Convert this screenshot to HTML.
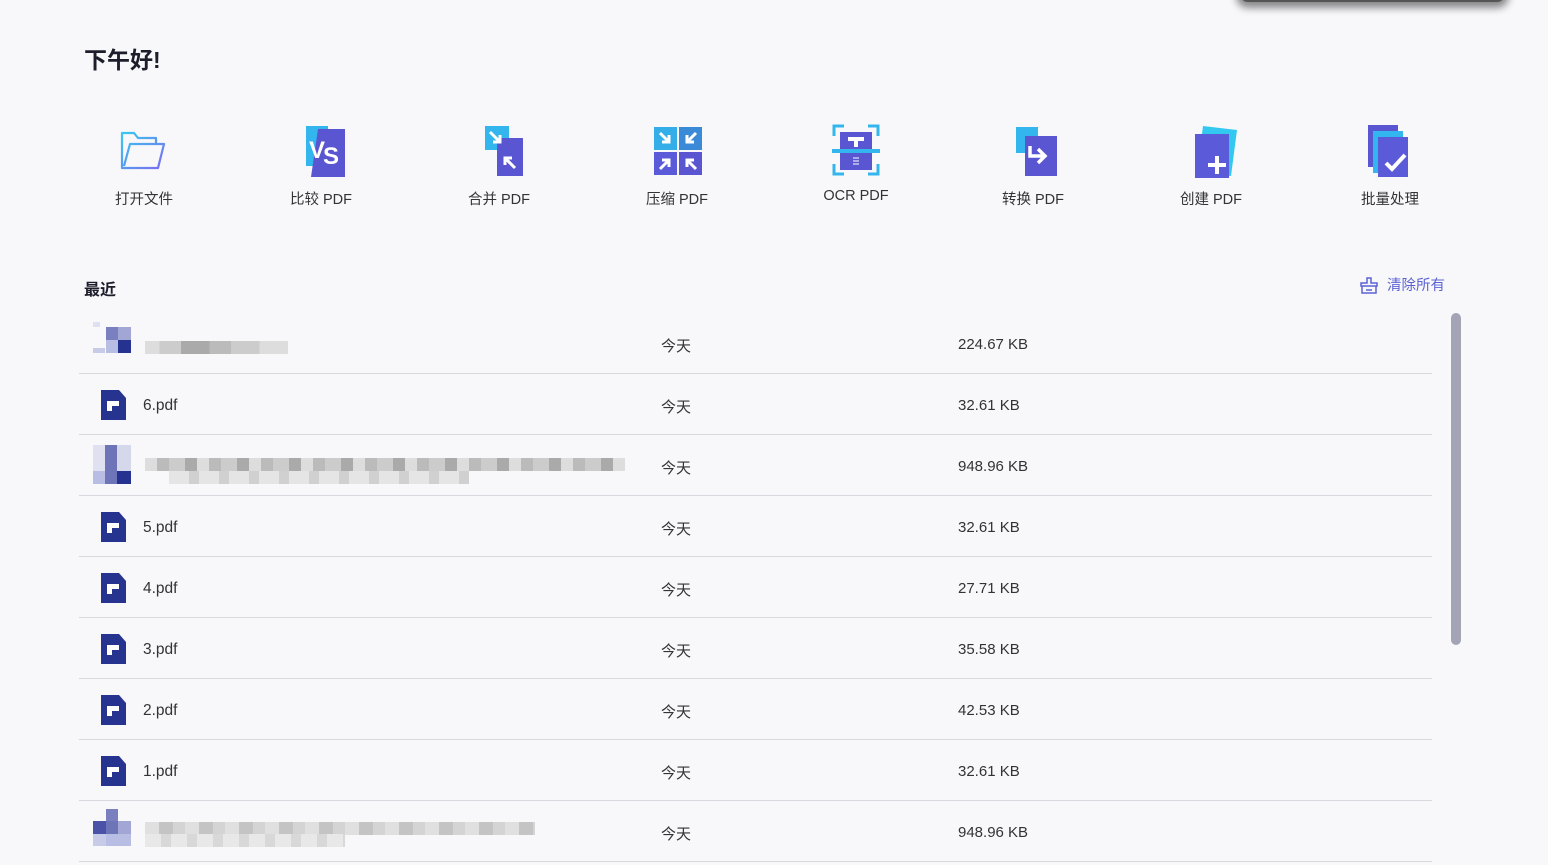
<!DOCTYPE html>
<html><head><meta charset="utf-8"><style>
body{margin:0;width:1548px;height:865px;background:#f8f8fb;font-family:"Liberation Sans","Noto Sans CJK SC",sans-serif;position:relative;overflow:hidden;color:#333}
.shadow{position:absolute;left:1240px;top:-14px;width:265px;height:16px;border-radius:8px;background:#555;box-shadow:0 2px 8px 4px rgba(0,0,0,.45)}
h1{position:absolute;left:84px;top:41px;margin:0;font-size:23px;font-weight:bold;color:#1d1d2b}
.tool{position:absolute;top:122px;width:140px;text-align:center}
.tool svg{display:block;margin:0 auto}
.tool span{display:block;font-size:14.5px;color:#333;margin-top:10px}
.recent{position:absolute;left:84px;top:276px;font-size:16px;font-weight:bold;color:#1d1d2b}
.clear{position:absolute;left:1360px;top:274px;font-size:14.5px;color:#5b63d3;display:flex;align-items:center;gap:9px}
.row{position:absolute;left:79px;width:1353px;height:60px;border-bottom:1px solid #d8d8de}
.row .ic{position:absolute;left:22px;top:16px}
.row .n{position:absolute;left:64px;top:23px;font-size:15.5px;color:#333}
.row .d{position:absolute;left:582px;top:22px;font-size:15px;color:#333}
.row .s{position:absolute;left:879px;top:23px;font-size:15px;color:#333}
.px{position:absolute;height:13px}
.scroll{position:absolute;left:1451px;top:313px;width:10px;height:332px;border-radius:5px;background:#a3a5b6}
</style></head><body>
<div class="shadow"></div>
<h1>下午好!</h1>

<div class="tool" style="left:74px"><svg width="52" height="56" viewBox="0 0 52 56"><defs><linearGradient id="fg" x1="0" y1="0" x2="1" y2="1"><stop offset="0" stop-color="#38c8f0"/><stop offset="1" stop-color="#7b6cf0"/></linearGradient></defs><path d="M4 18 V11 h12 l4 5 h18 v6 M4 18 V46 h36 l6-24 H12 l-6 22" fill="none" stroke="url(#fg)" stroke-width="2.2" stroke-linejoin="round"/></svg><span>打开文件</span></div>

<div class="tool" style="left:251px"><svg width="56" height="56" viewBox="0 0 56 56"><rect x="13" y="4" width="22" height="40" fill="#33b6ee"/><polygon points="25,7 52,7 52,55 18,55" fill="#5a55d0"/><text x="16" y="36" font-size="24" font-weight="bold" fill="#fff" font-family="Liberation Sans">V</text><text x="30" y="42" font-size="24" font-weight="bold" fill="#fff" font-family="Liberation Sans">S</text></svg><span>比较 PDF</span></div>

<div class="tool" style="left:429px"><svg width="56" height="56" viewBox="0 0 56 56"><rect x="14" y="4" width="24" height="24" fill="#33b6ee"/><rect x="26" y="16" width="26" height="38" fill="#5a55d0"/><path d="M19 10 l10 10 M29 13 v7 h-7" stroke="#fff" stroke-width="3" fill="none"/><path d="M44 46 l-10-10 M34 43 v-7 h7" stroke="#fff" stroke-width="3" fill="none"/></svg><span>合并 PDF</span></div>

<div class="tool" style="left:607px"><svg width="56" height="56" viewBox="0 0 56 56"><rect x="5" y="5" width="23" height="23" fill="#33aee8"/><rect x="30" y="5" width="23" height="23" fill="#3a8ad8"/><rect x="5" y="30" width="23" height="23" fill="#5b5ad8"/><rect x="30" y="30" width="23" height="23" fill="#5a55d0"/><g stroke="#fff" stroke-width="3" fill="none"><path d="M11 11l9 9M20 13v7h-7"/><path d="M47 11l-9 9M38 13v7h7"/><path d="M11 47l9-9M13 38h7v7"/><path d="M47 47l-9-9M45 38h-7v7"/></g></svg><span>压缩 PDF</span></div>

<div class="tool" style="left:786px"><svg width="56" height="56" viewBox="0 0 56 56"><g stroke="#33b6ee" stroke-width="3" fill="none"><path d="M6 14V4h10M40 4h10v10M6 42v10h10M40 52h10V42"/></g><rect x="12" y="10" width="32" height="38" fill="#5a55d0"/><rect x="4" y="27" width="48" height="4" fill="#33b6ee"/><path d="M20 17h16M28 17v8" stroke="#fff" stroke-width="4"/><path d="M25 36h6M25 39h6M25 42h6" stroke="#fff" stroke-width="1"/></svg><span>OCR PDF</span></div>

<div class="tool" style="left:963px"><svg width="56" height="56" viewBox="0 0 56 56"><rect x="11" y="5" width="22" height="26" fill="#33b6ee"/><rect x="20" y="14" width="32" height="40" fill="#5a55d0"/><path d="M25 24v10h14M33 27l7 7-7 7" stroke="#fff" stroke-width="3.5" fill="none"/></svg><span>转换 PDF</span></div>

<div class="tool" style="left:1141px"><svg width="56" height="56" viewBox="0 0 56 56"><polygon points="20,4 54,8 48,54 14,50" fill="#33c8f0"/><rect x="12" y="12" width="34" height="44" fill="#5b5ad8"/><path d="M34 34v18M25 43h18" stroke="#fff" stroke-width="4"/></svg><span>创建 PDF</span></div>

<div class="tool" style="left:1320px"><svg width="56" height="56" viewBox="0 0 56 56"><rect x="6" y="3" width="30" height="42" fill="#5a55d0"/><rect x="11" y="9" width="30" height="42" fill="#33b6ee"/><rect x="16" y="15" width="30" height="40" fill="#5b5ad8"/><path d="M24 41l6 6 13-14" stroke="#fff" stroke-width="4" fill="none"/></svg><span>批量处理</span></div>

<div class="recent">最近</div>
<div class="clear"><svg width="18" height="18" viewBox="0 0 18 18" fill="none" stroke="#5b63d3" stroke-width="1.5"><path d="M7 2h4v5h6v3H1V7h6z M2 10v7h14v-7 M6 14h6"/></svg>清除所有</div>

<div class="row" style="top:313px"><svg class="ic" width="40" height="32" viewBox="0 0 40 32" style="left:14px;top:9px"><rect x="0" y="0" width="7" height="5" fill="#dfe0f0"/><rect x="13" y="5" width="12" height="13" fill="#7a7fbf"/><rect x="25" y="5" width="13" height="13" fill="#a1a6d4"/><rect x="13" y="18" width="12" height="13" fill="#b8bde4"/><rect x="25" y="18" width="13" height="13" fill="#25328f"/><rect x="0" y="26" width="12" height="5" fill="#c8cbe8"/></svg>
<div class="px" style="left:66px;top:28px;width:143px;background:linear-gradient(90deg,#ddd 0 10%,#ccc 10% 25%,#aaa 25% 45%,#bbb 45% 60%,#ccc 60% 80%,#ddd 80%)"></div>
<div class="d">今天</div><div class="s">224.67 KB</div></div>

<div class="row" style="top:374px"><svg class="ic" width="26" height="30" viewBox="0 0 26 30"><path d="M0 0h18l7 8v22H0z" fill="#27348f"/><path d="M6 11h12v5h-7v5H6z" fill="#fff"/></svg><div class="n">6.pdf</div><div class="d">今天</div><div class="s">32.61 KB</div></div>

<div class="row" style="top:435px"><svg class="ic" width="40" height="40" viewBox="0 0 40 40" style="left:14px;top:10px"><rect x="0" y="0" width="12" height="26" fill="#dfe0f0"/><rect x="12" y="0" width="12" height="26" fill="#6e74b8"/><rect x="24" y="0" width="14" height="26" fill="#d5d7ea"/><rect x="0" y="26" width="12" height="13" fill="#b8bde4"/><rect x="12" y="26" width="12" height="13" fill="#6e74b8"/><rect x="24" y="26" width="14" height="13" fill="#25328f"/></svg>
<div class="px" style="left:66px;top:23px;width:480px;background:repeating-linear-gradient(90deg,#ddd 0 12px,#bbb 12px 24px,#ccc 24px 40px,#aaa 40px 52px)"></div>
<div class="px" style="left:90px;top:36px;width:300px;background:repeating-linear-gradient(90deg,#e5e5e5 0 20px,#d0d0d0 20px 30px)"></div>
<div class="d">今天</div><div class="s">948.96 KB</div></div>

<div class="row" style="top:496px"><svg class="ic" width="26" height="30" viewBox="0 0 26 30"><path d="M0 0h18l7 8v22H0z" fill="#27348f"/><path d="M6 11h12v5h-7v5H6z" fill="#fff"/></svg><div class="n">5.pdf</div><div class="d">今天</div><div class="s">32.61 KB</div></div>
<div class="row" style="top:557px"><svg class="ic" width="26" height="30" viewBox="0 0 26 30"><path d="M0 0h18l7 8v22H0z" fill="#27348f"/><path d="M6 11h12v5h-7v5H6z" fill="#fff"/></svg><div class="n">4.pdf</div><div class="d">今天</div><div class="s">27.71 KB</div></div>
<div class="row" style="top:618px"><svg class="ic" width="26" height="30" viewBox="0 0 26 30"><path d="M0 0h18l7 8v22H0z" fill="#27348f"/><path d="M6 11h12v5h-7v5H6z" fill="#fff"/></svg><div class="n">3.pdf</div><div class="d">今天</div><div class="s">35.58 KB</div></div>
<div class="row" style="top:679px"><svg class="ic" width="26" height="30" viewBox="0 0 26 30"><path d="M0 0h18l7 8v22H0z" fill="#27348f"/><path d="M6 11h12v5h-7v5H6z" fill="#fff"/></svg><div class="n">2.pdf</div><div class="d">今天</div><div class="s">42.53 KB</div></div>
<div class="row" style="top:740px"><svg class="ic" width="26" height="30" viewBox="0 0 26 30"><path d="M0 0h18l7 8v22H0z" fill="#27348f"/><path d="M6 11h12v5h-7v5H6z" fill="#fff"/></svg><div class="n">1.pdf</div><div class="d">今天</div><div class="s">32.61 KB</div></div>

<div class="row" style="top:801px"><svg class="ic" width="40" height="40" viewBox="0 0 40 40" style="left:14px;top:8px"><rect x="13" y="0" width="12" height="12" fill="#7a7fbf"/><rect x="0" y="12" width="13" height="13" fill="#4a52a8"/><rect x="13" y="12" width="12" height="13" fill="#6e74b8"/><rect x="25" y="12" width="13" height="13" fill="#a1a6d4"/><rect x="0" y="25" width="13" height="12" fill="#c8cbe8"/><rect x="13" y="25" width="25" height="12" fill="#b8bde4"/></svg>
<div class="px" style="left:66px;top:21px;width:390px;background:repeating-linear-gradient(90deg,#e0e0e0 0 14px,#c4c4c4 14px 28px,#d4d4d4 28px 40px)"></div>
<div class="px" style="left:66px;top:33px;width:200px;background:repeating-linear-gradient(90deg,#e8e8e8 0 16px,#d8d8d8 16px 26px)"></div>
<div class="d">今天</div><div class="s">948.96 KB</div></div>

<div class="scroll"></div>
</body></html>
